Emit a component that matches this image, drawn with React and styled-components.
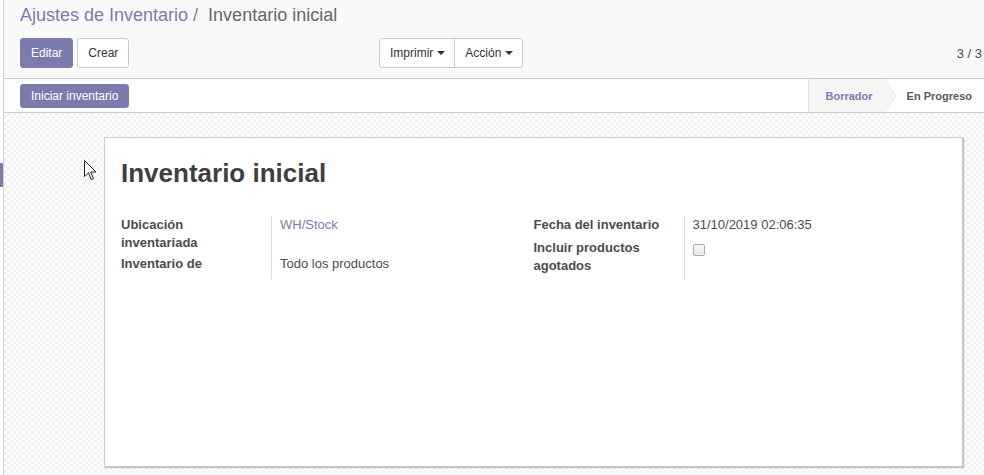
import styled, { createGlobalStyle } from "styled-components";

const GlobalStyle = createGlobalStyle`
  html, body {
    margin: 0;
    padding: 0;
    background: #fff;
  }
  body {
    font-family: "Liberation Sans", Arial, sans-serif;
    font-size: 13px;
    color: #4c4c4c;
  }
  * { box-sizing: border-box; }
`;

const Page = styled.div`
  display: flex;
  width: 984px;
  height: 475px;
  overflow: hidden;
`;

const Rail = styled.div`
  flex: 0 0 4px;
  border-right: 1px solid #cfcfcf;
  display: flex;
  flex-direction: column;
`;

const RailMark = styled.div`
  margin-top: 163px;
  height: 24px;
  width: 3px;
  background: #7c7bad;
`;

const Main = styled.div`
  flex: 1;
  min-width: 0;
  display: flex;
  flex-direction: column;
`;

const ControlPanel = styled.div`
  background: #f9f9f9;
  border-bottom: 1px solid #cbcbcb;
  padding: 0 0 10px 16px;
`;

const Breadcrumb = styled.div`
  height: 38px;
  padding-top: 4px;
  font-size: 18px;
  line-height: 22px;
  white-space: nowrap;
`;

const Crumb = styled.span`
  color: ${(p) => (p.$active ? "#666" : "#7c7bad")};
`;

const ButtonRow = styled.div`
  display: flex;
  align-items: center;
  height: 30px;
`;

const LeftButtons = styled.div`
  flex: 0 0 359px;
  display: flex;
  gap: 4px;
`;

const Button = styled.button`
  font-family: inherit;
  font-size: 12px;
  line-height: 18px;
  padding: ${(p) => (p.$small ? "2px 10px" : "5px 10px")};
  border-radius: 3px;
  border: 1px solid ${(p) => (p.$primary ? "#7c7bad" : "#ccc")};
  background: ${(p) => (p.$primary ? "#7c7bad" : "#fff")};
  color: ${(p) => (p.$primary ? "#fff" : "#333")};
  cursor: pointer;
`;

const Group = styled.div`
  display: flex;
  border: 1px solid #ccc;
  border-radius: 3px;
  background: #fff;
`;

const GroupButton = styled.button`
  font-family: inherit;
  font-size: 12px;
  line-height: 18px;
  padding: 0 9px 0 10px;
  height: 28px;
  border: none;
  border-left: ${(p) => (p.$first ? "none" : "1px solid #ccc")};
  background: transparent;
  color: #333;
  display: flex;
  align-items: center;
  gap: 3px;
`;

const Caret = styled.span`
  display: inline-block;
  width: 0;
  height: 0;
  border-left: 4px solid transparent;
  border-right: 4px solid transparent;
  border-top: 4px solid #333;
  margin-left: 1px;
`;

const Pager = styled.div`
  margin-left: auto;
  padding-right: 2px;
  font-size: 13px;
  color: #4c4c4c;
  white-space: nowrap;
`;

const StatusBar = styled.div`
  display: flex;
  align-items: center;
  height: 34px;
  border-bottom: 1px solid #cbcbcb;
  padding-left: 16px;
  background: #fff;
`;

const Stages = styled.div`
  margin-left: auto;
  display: flex;
  align-self: stretch;
  overflow: hidden;
  border-left: 1px solid #ddd;
`;

const Stage = styled.div`
  position: relative;
  display: flex;
  align-items: center;
  padding: ${(p) => (p.$current ? "0 12px 0 22px" : "0 12px 0 17px")};
  font-size: 11px;
  font-weight: bold;
  white-space: nowrap;
  background: ${(p) => (p.$current ? "#fff" : "#f5f5f5")};
  color: ${(p) => (p.$current ? "#5a5a5a" : "#7c7bad")};

  &::before,
  &::after {
    content: "";
    position: absolute;
    top: 0;
    width: 0;
    height: 0;
    border-top: 17px solid transparent;
    border-bottom: 16px solid transparent;
    z-index: 2;
  }
  &::before {
    right: -11px;
    border-left: 11px solid #dcdcdc;
  }
  &::after {
    right: -10px;
    border-left: 10px solid ${(p) => (p.$current ? "#fff" : "#f5f5f5")};
  }
`;

const Canvas = styled.div`
  position: relative;
  flex: 1;
  padding: 24px 21px 0 100px;
  background-color: #fff;
  background-image:
    linear-gradient(45deg, #f1f1f1 25%, transparent 25%, transparent 75%, #f1f1f1 75%),
    linear-gradient(45deg, #f1f1f1 25%, transparent 25%, transparent 75%, #f1f1f1 75%);
  background-size: 6px 6px;
  background-position: 0 0, 3px 3px;
`;

const Cursor = styled.svg`
  position: absolute;
  left: 80px;
  top: 47px;
`;

const Sheet = styled.div`
  height: 330px;
  background: #fff;
  border: 1px solid #cac8d8;
  box-shadow: 1px 1px 1px rgba(150, 140, 185, 0.55);
  padding: 20px 16px 0 16px;
`;

const Title = styled.h1`
  margin: 0 0 27px 0;
  font-size: 26px;
  line-height: 31px;
  font-weight: bold;
  color: #3f3f3f;
`;

const Groups = styled.div`
  display: grid;
  grid-template-columns: 1fr 1fr;
`;

const FieldGrid = styled.div`
  display: grid;
  grid-template-columns: 150px 1fr;
  line-height: 18px;
`;

const Label = styled.div`
  font-weight: bold;
  color: #4c4c4c;
  padding-right: 8px;
  padding-bottom: ${(p) => p.$pb || 0}px;
`;

const Value = styled.div`
  border-left: 1px solid #ddd;
  padding-left: 8px;
  padding-bottom: ${(p) => p.$pb || 0}px;
  color: ${(p) => (p.$link ? "#7c7bad" : "#4c4c4c")};
`;

const Check = styled.span`
  display: block;
  margin-top: 5px;
  width: 12px;
  height: 12px;
  border: 1px solid #aaa;
  border-radius: 2px;
  background: linear-gradient(#f7f7f7, #e9e9e9);
`;

export default function App() {
  return (
    <>
      <GlobalStyle />
      <Page>
        <Rail>
          <RailMark />
        </Rail>
        <Main>
          <ControlPanel>
            <Breadcrumb>
              <Crumb>Ajustes de Inventario / </Crumb>
              <Crumb $active>&nbsp;Inventario inicial</Crumb>
            </Breadcrumb>
            <ButtonRow>
              <LeftButtons>
                <Button $primary>Editar</Button>
                <Button>Crear</Button>
              </LeftButtons>
              <Group>
                <GroupButton $first>
                  Imprimir <Caret />
                </GroupButton>
                <GroupButton>
                  Acción <Caret />
                </GroupButton>
              </Group>
              <Pager>3 / 3</Pager>
            </ButtonRow>
          </ControlPanel>
          <StatusBar>
            <Button $primary $small>Iniciar inventario</Button>
            <Stages>
              <Stage>Borrador</Stage>
              <Stage $current>En Progreso</Stage>
            </Stages>
          </StatusBar>
          <Canvas>
            <Cursor width="13" height="21" viewBox="0 0 13 21">
              <path
                d="M0.5 0.5 L0.5 16.5 L4.5 12.8 L7.2 19.5 L9.4 18.6 L6.8 12 L12 12 Z"
                fill="#fff"
                stroke="#222"
                strokeWidth="1"
                strokeLinejoin="round"
              />
            </Cursor>
            <Sheet>
              <Title>Inventario inicial</Title>
              <Groups>
                <FieldGrid>
                  <Label>Ubicación inventariada</Label>
                  <Value $link>WH/Stock</Value>
                  <Label $pb={4}>Inventario de</Label>
                  <Value $pb={4}>Todo los productos</Value>
                </FieldGrid>
                <FieldGrid>
                  <Label $pb={5}>Fecha del inventario</Label>
                  <Value $pb={5}>31/10/2019 02:06:35</Value>
                  <Label $pb={4}>Incluir productos agotados</Label>
                  <Value $pb={4}>
                    <Check />
                  </Value>
                </FieldGrid>
              </Groups>
            </Sheet>
          </Canvas>
        </Main>
      </Page>
    </>
  );
}
